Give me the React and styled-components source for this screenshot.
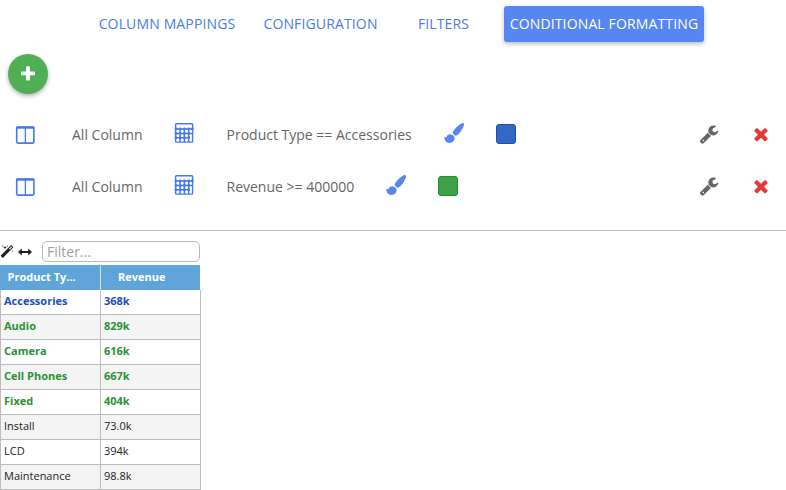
import React from "react";
import styled, { createGlobalStyle } from "styled-components";

const GlobalStyle = createGlobalStyle`
  * { box-sizing: border-box; }
  body {
    margin: 0;
    background: #fff;
    font-family: "Open Sans", sans-serif;
    overflow: hidden;
  }
`;

const Page = styled.main`
  width: 786px;
  height: 490px;
  overflow: hidden;
`;

const Tabs = styled.nav`
  display: flex;
  padding: 6px 0 0 93px;
  height: 54px;
`;

const Tab = styled.button`
  width: ${(p) => p.$width}px;
  height: 36px;
  margin: 0 ${(p) => p.$gap || 0}px 0 0;
  padding: 0;
  border: 0;
  border-radius: 3px;
  font: 14px/36px "Open Sans", sans-serif;
  letter-spacing: 0.14px;
  white-space: nowrap;
  color: ${(p) => (p.$active ? "#fff" : "#4a7ce8")};
  background: ${(p) => (p.$active ? "#5686ef" : "transparent")};
  box-shadow: ${(p) => (p.$active ? "0 2px 4px rgba(0, 0, 0, 0.26)" : "none")};
`;

const AddButton = styled.button`
  display: flex;
  align-items: center;
  justify-content: center;
  width: 40px;
  height: 40px;
  margin-left: 8px;
  padding: 0;
  border: 0;
  border-radius: 50%;
  color: #fff;
  background: #50ae55;
  box-shadow: 0 2px 4px rgba(0, 0, 0, 0.3);
`;

const Rules = styled.section`
  height: 137px;
  padding-top: 14px;
  border-bottom: 1px solid #bdbdbd;
`;

const Rule = styled.div`
  display: flex;
  align-items: center;
  height: 52px;
  padding: 0 17px 0 15px;
`;

const Label = styled.span`
  width: ${(p) => p.$width}px;
  margin-left: ${(p) => p.$left}px;
  margin-right: ${(p) => p.$right || 0}px;
  padding-top: 1px;
  font-size: 14px;
  line-height: 20px;
  color: #666;
  white-space: nowrap;
`;

const Icon = styled.svg`
  display: block;
  flex: none;
  width: ${(p) => p.$w}px;
  height: ${(p) => p.$h || p.$w}px;
  color: ${(p) => p.$color || "currentColor"};
  margin: ${(p) => p.$m || 0};
`;

const Swatch = styled.span`
  width: 20px;
  height: 20px;
  margin-left: 32px;
  border: 1px solid ${(p) => p.$edge};
  border-radius: 3px;
  background: ${(p) => p.$fill};
`;

const Actions = styled.div`
  display: flex;
  align-items: center;
  margin-left: auto;
`;

const Toolbar = styled.div`
  display: flex;
  align-items: center;
  height: 34px;
  padding-top: 7px;
  color: #202124;
`;

const FilterInput = styled.input`
  width: 158px;
  height: 21px;
  margin-left: 10px;
  padding: 0 4px;
  border: 1px solid #b8b8b8;
  border-radius: 5px;
  outline: 0;
  font: 14px "Open Sans", sans-serif;
  color: #333;
  &::placeholder { color: #a0a0a0; opacity: 1; }
`;

const Grid = styled.div`
  width: 201px;
`;

const GridHeader = styled.div`
  display: grid;
  grid-template-columns: 101px 99px;
  width: 200px;
  height: 25px;
  background: #5fa5d9;
`;

const HeaderCell = styled.div`
  padding-left: ${(p) => p.$left}px;
  border-right: ${(p) => (p.$divider ? "1px solid #d4e3ee" : "0")};
  font-size: 11px;
  font-weight: 700;
  line-height: 23px;
  color: #fff;
`;

const GridRow = styled.div`
  display: grid;
  grid-template-columns: 100px 100px;
  height: 25px;
  border-left: 1px solid #bdbdbd;
  background: ${(p) => (p.$alt ? "#f4f4f4" : "#fff")};
  color: ${(p) => p.$color || "#222"};
  font-weight: ${(p) => (p.$color ? 700 : 400)};
`;

const Cell = styled.div`
  padding-left: 3px;
  border-right: 1px solid #bdbdbd;
  border-bottom: 1px solid #bdbdbd;
  font-size: 11px;
  line-height: 21px;
  white-space: nowrap;
`;

const ColumnsIcon = () => (
  <Icon $w={20} $h={18} $color="#447ae9" viewBox="0 0 20 18" fill="none" stroke="currentColor" $m="2px 0 0">
    <rect x="1.7" y="1" width="17.2" height="16.1" rx="1" strokeWidth="1.6" />
    <path d="M1.5 1.6h17.6" strokeWidth="2.2" />
    <path d="M10.4 2v15" strokeWidth="1.3" />
  </Icon>
);

const CalculatorIcon = () => (
  <Icon $w={20} $h={20} $color="#447ae9" viewBox="0 0 20 20" fill="none" stroke="currentColor" $m="0 0 2px">
    <rect x="1.6" y=".7" width="17" height="18.4" rx=".8" strokeWidth="1.4" />
    <path d="M2 6h16.5M2 10.4h16.5M2 14.7h12.7M6.1 6v13M10.4 6v13M14.7 6v13" strokeWidth="1.5" />
    <path d="M2 6v.1M18.3 6v.1M6.1 6v.1M10.4 6v.1M14.7 6v.1M2 10.4v.1M6.1 10.4v.1M10.4 10.4v.1M14.7 10.4v.1M2 14.7v.1M6.1 14.7v.1M10.4 14.7v.1M14.7 14.7v.1" strokeWidth="2.9" strokeLinecap="round" />
  </Icon>
);

const BrushIcon = () => (
  <Icon $w={20} $h={20} $color="#5686ef" viewBox="0 0 20 20" fill="currentColor" $m="0 0 2px 32px">
    <path d="M19.7.4c.6.6.5 1.5.1 2.5-1.3 2.7-3.1 5.7-5.2 8-.9 1-2 1.6-3.4 1.8L8.7 10.2c.1-1.4.7-2.5 1.5-3.5C12 4.5 14.9 1.7 17.4.5c.9-.5 1.8-.6 2.3-.1Z" />
    <path d="M7.1 11.4c2 .3 3.4 1.8 3.5 3.6.1 2.9-2.2 4.9-5.1 4.9-3.1 0-5.2-2.3-5.3-6.2.9.9 2.1.8 2.6-.3.7-1.5 2.3-2.4 4.3-2Z" />
  </Icon>
);

const GLYPHS = {
  plus: "M1600 736v192q0 40-28 68t-68 28h-416v416q0 40-28 68t-68 28h-192q-40 0-68-28t-28-68v-416h-416q-40 0-68-28t-28-68v-192q0-40 28-68t68-28h416v-416q0-40 28-68t68-28h192q40 0 68 28t28 68v416h416q40 0 68 28t28 68z",
  times: "M1490 1322q0 40-28 68l-136 136q-28 28-68 28t-68-28l-294-294-294 294q-28 28-68 28t-68-28l-136-136q-28-28-28-68t28-68l294-294-294-294q-28-28-28-68t28-68l136-136q28-28 68-28t68 28l294 294 294-294q28-28 68-28t68 28l136 136q28 28 28 68t-28 68l-294 294 294 294q28 28 28 68z",
  wrench: "M448 1472q0-26-19-45t-45-19-45 19-19 45 19 45 45 19 45-19 19-45zm644-420l-682 682q-37 37-90 37-52 0-91-37l-106-108q-38-36-38-90 0-53 38-91l681-681q39 98 114.5 173.5t173.5 114.5zm634-435q0 39-23 106-47 134-164.5 217.5t-258.5 83.5q-185 0-316.5-131.5t-131.5-316.5 131.5-316.5 316.5-131.5q58 0 121.5 16.5t107.5 46.5q16 11 16 28t-16 28l-293 169v224l193 107q5-3 79-48.5t135.5-81 70.5-35.5q15 0 23.5 10t8.5 25z",
  magic: "M1254 581l293-293-107-107-293 293zm447-293q0 27-18 45l-1286 1286q-18 18-45 18t-45-18l-198-198q-18-18-18-45t18-45l1286-1286q18-18 45-18t45 18l198 198q18 18 18 45zm-1351-190l98 30-98 30-30 98-30-98-98-30 98-30 30-98zm350 162l196 60-196 60-60 196-60-196-196-60 196-60 60-196zm930 478l98 30-98 30-30 98-30-98-98-30 98-30 30-98zm-640-640l98 30-98 30-30 98-30-98-98-30 98-30 30-98z",
};

const Glyph = ({ name, ...rest }) => (
  <Icon viewBox="0 0 1792 1792" fill="currentColor" {...rest}>
    <path d={GLYPHS[name]} />
  </Icon>
);

const ArrowsIcon = () => (
  <Icon $w={14} $h={8} viewBox="0 0 14 8" fill="currentColor" $m="0 0 0 4px">
    <path d="M0 4 3.8.4v2.5h6.4V.4L14 4l-3.8 3.6V5.1H3.8v2.5Z" />
  </Icon>
);

const TABS = [
  { text: "COLUMN MAPPINGS", width: 148, gap: 17 },
  { text: "CONFIGURATION", width: 125, gap: 29 },
  { text: "FILTERS", width: 63, gap: 29 },
  { text: "CONDITIONAL FORMATTING", width: 200, active: true },
];

const RULES = [
  { text: "Product Type == Accessories", width: 185.5, fill: "#3468c6", edge: "#1c50b4" },
  { text: "Revenue >= 400000", width: 127.5, fill: "#40a04a", edge: "#218c2c" },
];

const GREEN = "#2b9138";
const ROWS = [
  ["Accessories", "368k", "#214db3"],
  ["Audio", "829k", GREEN],
  ["Camera", "616k", GREEN],
  ["Cell Phones", "667k", GREEN],
  ["Fixed", "404k", GREEN],
  ["Install", "73.0k"],
  ["LCD", "394k"],
  ["Maintenance", "98.8k"],
];

export default function App() {
  return (
    <Page>
      <GlobalStyle />
      <Tabs>
        {TABS.map((t) => (
          <Tab key={t.text} $width={t.width} $gap={t.gap} $active={t.active}>{t.text}</Tab>
        ))}
      </Tabs>
      <AddButton aria-label="Add rule"><Glyph name="plus" $w={18} $m="0 0 1px" /></AddButton>
      <Rules>
        {RULES.map((r) => (
          <Rule key={r.text}>
            <ColumnsIcon />
            <Label $left={37} $width={71} $right={31}>All Column</Label>
            <CalculatorIcon />
            <Label $left={32.5} $width={r.width}>{r.text}</Label>
            <BrushIcon />
            <Swatch $fill={r.fill} $edge={r.edge} />
            <Actions>
              <Glyph name="wrench" $w={20} $color="#666" />
              <Glyph name="times" $w={20} $color="#e53935" $m="0 -2px 0 32px" />
            </Actions>
          </Rule>
        ))}
      </Rules>
      <Toolbar>
        <Glyph name="magic" $w={14} />
        <ArrowsIcon />
        <FilterInput placeholder="Filter..." aria-label="Filter" />
      </Toolbar>
      <Grid>
        <GridHeader>
          <HeaderCell $left={7.5} $divider>Product Ty...</HeaderCell>
          <HeaderCell $left={17}>Revenue</HeaderCell>
        </GridHeader>
        {ROWS.map(([name, value, color], i) => (
          <GridRow key={name} $color={color} $alt={i % 2 === 1}>
            <Cell>{name}</Cell>
            <Cell>{value}</Cell>
          </GridRow>
        ))}
      </Grid>
    </Page>
  );
}
